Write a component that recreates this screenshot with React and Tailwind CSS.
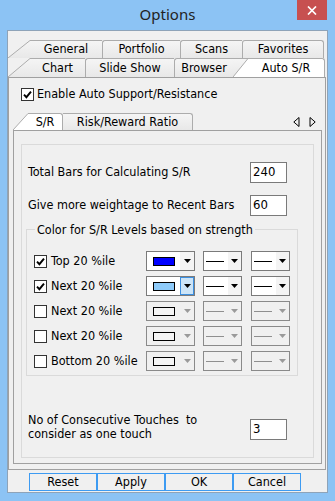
import React from "react";

const FONT = "font-['DejaVu_Sans_Condensed','DejaVu_Sans',sans-serif]";

function Check({ checked }) {
  return (
    <span className="w-[13px] h-[13px] border border-[#333333] bg-white flex items-center justify-center shrink-0">
      {checked && (
        <svg width="9" height="9" viewBox="0 0 9 9">
          <path d="M1 4.6 L3.4 7.2 L8 1.6" stroke="#000" strokeWidth="1.9" fill="none" />
        </svg>
      )}
    </span>
  );
}

function Arrow({ color }) {
  return (
    <svg width="7" height="4" viewBox="0 0 7 4">
      <polygon points="0,0 7,0 3.5,4" fill={color} />
    </svg>
  );
}

// left slant piece of a tab; left/top triangle is page bg, the rest is tab fill
function Slant({ w, h, fill, back, id }) {
  return (
    <svg width={w} height={h} viewBox={`0 0 ${w} ${h}`} className="shrink-0 block">
      <defs>
        <linearGradient id={id} x1="0" y1="0" x2="0" y2="1">
          <stop offset="0" stopColor="#f5f5f5" />
          <stop offset="1" stopColor="#e8e8e8" />
        </linearGradient>
      </defs>
      <rect x="0" y="0" width={w} height={h} fill={back === "grad" ? `url(#${id})` : back} />
      <polygon points={`0,${h} ${w},0.5 ${w},${h}`} fill={fill === "grad" ? `url(#${id})` : fill} />
      {back === "grad" && <line x1="0" y1="0.5" x2={w} y2="0.5" stroke="#acacac" />}
      <line x1="0" y1={h} x2={w} y2="0.5" stroke="#acacac" />
    </svg>
  );
}

function Tab({ children, className }) {
  return (
    <div className={`h-full flex items-center justify-center border-t border-[#acacac] ${className}`}>
      {children}
    </div>
  );
}

function ColorCombo({ swatch, enabled, focus }) {
  return (
    <div className={`w-[49px] h-[20px] flex border ${enabled ? "bg-white border-[#7a7a7a]" : "bg-[#f0f0f0] border-[#8a8a8a]"}`}>
      <div className="flex-1 flex items-center pl-[6px]">
        <span className={`w-[22px] h-[9px] border border-black ${swatch}`} />
      </div>
      <div
        className={`w-[14px] flex items-center justify-center ${
          focus ? "bg-[#cce4f7] border border-[#3c8fe0]" : enabled ? "bg-[#f4f4f4]" : ""
        }`}
      >
        <Arrow color={enabled ? "#000" : "#9a9a9a"} />
      </div>
    </div>
  );
}

function LineCombo({ enabled }) {
  return (
    <div className={`w-[39px] h-[20px] flex border ${enabled ? "bg-white border-[#7a7a7a]" : "bg-[#f0f0f0] border-[#8a8a8a]"}`}>
      <div className="flex-1 flex items-center pl-[2px]">
        <span className={`w-[18px] h-px ${enabled ? "bg-black" : "bg-[#8f8f8f]"}`} />
      </div>
      <div className={`w-[13px] flex items-center justify-center ${enabled ? "bg-[#f4f4f4]" : ""}`}>
        <Arrow color={enabled ? "#000" : "#9a9a9a"} />
      </div>
    </div>
  );
}

function Field({ value }) {
  return (
    <div className="w-[37px] h-[21px] border border-[#7a7a7a] bg-white pl-[2px] leading-[17px] text-[13px]">
      {value}
    </div>
  );
}

const levels = [
  { label: "Top 20 %ile", on: true, swatch: "bg-[#0000ff]" },
  { label: "Next 20 %ile", on: true, swatch: "bg-[#8ecbfa]", focus: true },
  { label: "Next 20 %ile", on: false, swatch: "bg-[#f4f4f4]" },
  { label: "Next 20 %ile", on: false, swatch: "bg-[#f4f4f4]" },
  { label: "Bottom 20 %ile", on: false, swatch: "bg-[#f4f4f4]" },
];

export default function App() {
  return (
    <div className={`w-[335px] h-[501px] bg-[#8cc3f4] flex flex-col text-[12.5px] text-black ${FONT}`}>
      {/* title bar */}
      <div className="h-[30px] grid grid-cols-[1fr_auto_1fr]">
        <div />
        <div className="pt-[3px] text-[15px] text-[#222] font-['Noto_Sans',sans-serif]">Options</div>
        <div className="flex justify-end pr-[8px]">
          <div className="w-[30px] h-[20px] bg-[#c75050] flex items-center justify-center">
            <svg width="10" height="9" viewBox="0 0 10 9">
              <path d="M1 0.5 L9 8.5 M9 0.5 L1 8.5" stroke="#fff" strokeWidth="1.7" />
            </svg>
          </div>
        </div>
      </div>

      {/* client */}
      <div className="mx-[7px] h-[463px] border border-[#8ea3b8] bg-[#f0f0f0] flex flex-col pt-[9px]">
        {/* back tab row */}
        <div className="h-[18px] flex">
          <Slant w={22} h={18} fill="grad" back="#f0f0f0" id="g1" />
          <Tab className="w-[72px] bg-gradient-to-b from-[#f5f5f5] to-[#e8e8e8]">General</Tab>
          <Tab className="w-[78px] border-l rounded-tl-[3px] bg-gradient-to-b from-[#f5f5f5] to-[#e8e8e8]">Portfolio</Tab>
          <Tab className="w-[62px] border-l rounded-tl-[3px] bg-gradient-to-b from-[#f5f5f5] to-[#e8e8e8]">Scans</Tab>
          <Tab className="w-[82px] border-l border-r rounded-t-[3px] bg-gradient-to-b from-[#f5f5f5] to-[#e8e8e8]">Favorites</Tab>
        </div>
        {/* front tab row */}
        <div className="h-[19px] flex">
          <Slant w={22} h={19} fill="grad" back="#f0f0f0" id="g2" />
          <Tab className="w-[55px] bg-gradient-to-b from-[#f5f5f5] to-[#e8e8e8]">Chart</Tab>
          <Tab className="w-[89px] border-l rounded-tl-[3px] bg-gradient-to-b from-[#f5f5f5] to-[#e8e8e8]">Slide Show</Tab>
          <Tab className="w-[59px] border-l rounded-tl-[3px] bg-gradient-to-b from-[#f5f5f5] to-[#e8e8e8]">Browser</Tab>
          <Slant w={15} h={19} fill="#ffffff" back="grad" id="g3" />
          <Tab className="w-[77px] border-r rounded-tr-[3px] bg-white">Auto S/R</Tab>
        </div>

        {/* Auto S/R page */}
        <div className="mr-px h-[393px] border border-[#a0a0a0] flex flex-col">
          <div className="mt-[9px] ml-[12px] flex items-center gap-[3px] h-[15px]">
            <Check checked />
            <span>Enable Auto Support/Resistance</span>
          </div>

          {/* inner tabs */}
          <div className="mt-[11px] ml-[4px] mr-[3px] h-[17px] flex">
            <Slant w={15} h={17} fill="#ffffff" back="#f0f0f0" id="g4" />
            <Tab className="w-[35px] border-r rounded-tr-[3px] bg-white">S/R</Tab>
            <Tab className="w-[130px] border-r rounded-tr-[3px] bg-gradient-to-b from-[#f5f5f5] to-[#e8e8e8]">Risk/Reward Ratio</Tab>
            <div className="flex-1 flex items-center justify-end gap-[9px] pr-[6px]">
              <svg width="7" height="10" viewBox="0 0 7 10">
                <polygon points="6,0.5 6,9.5 0.8,5" fill="none" stroke="#000" />
              </svg>
              <svg width="7" height="10" viewBox="0 0 7 10">
                <polygon points="1,0.5 1,9.5 6.2,5" fill="none" stroke="#000" />
              </svg>
            </div>
          </div>

          {/* S/R page */}
          <div className="ml-[4px] mr-[3px] h-[334px] border border-[#a0a0a0] flex flex-col">
            <div className="mt-[13px] mx-[7px] h-[314px] border border-[#dadada] flex flex-col">
              <div className="mt-[17px] pl-[6px] flex items-center">
                <span className="w-[222px]">Total Bars for Calculating S/R</span>
                <Field value="240" />
              </div>
              <div className="mt-[12px] pl-[6px] flex items-center">
                <span className="w-[222px]">Give more weightage to Recent Bars</span>
                <Field value="60" />
              </div>

              <fieldset className="mt-[6px] ml-[4px] w-[268px] border border-[#dadada] px-[7px] pb-[4px]">
                <legend className="ml-[1px] px-[2px] leading-[15px]">Color for S/R Levels based on strength</legend>
                <div className="mt-[14px] flex flex-col gap-[5px]">
                  {levels.map((l, i) => (
                    <div key={i} className="h-[20px] flex items-center">
                      <div className="w-[112px] flex items-center gap-[4px]">
                        <Check checked={l.on} />
                        <span>{l.label}</span>
                      </div>
                      <ColorCombo swatch={l.swatch} enabled={l.on} focus={l.focus} />
                      <div className="ml-[8px]">
                        <LineCombo enabled={l.on} />
                      </div>
                      <div className="ml-[9px]">
                        <LineCombo enabled={l.on} />
                      </div>
                    </div>
                  ))}
                </div>
              </fieldset>

              <div className="mt-[37px] pl-[6px] flex items-start">
                <div className="w-[222px] leading-[14px]">
                  <div>No of Consecutive Touches&nbsp; to</div>
                  <div>consider as one touch</div>
                </div>
                <div className="mt-[6px]">
                  <Field value="3" />
                </div>
              </div>
            </div>
          </div>
        </div>

        {/* buttons */}
        <div className="mt-[3px] ml-[21px] flex">
          {["Reset", "Apply", "OK", "Cancel"].map((b) => (
            <div key={b} className="w-[68px] h-[18px] border border-[#3d9bf2] flex items-center justify-center">
              {b}
            </div>
          ))}
        </div>
      </div>
    </div>
  );
}
